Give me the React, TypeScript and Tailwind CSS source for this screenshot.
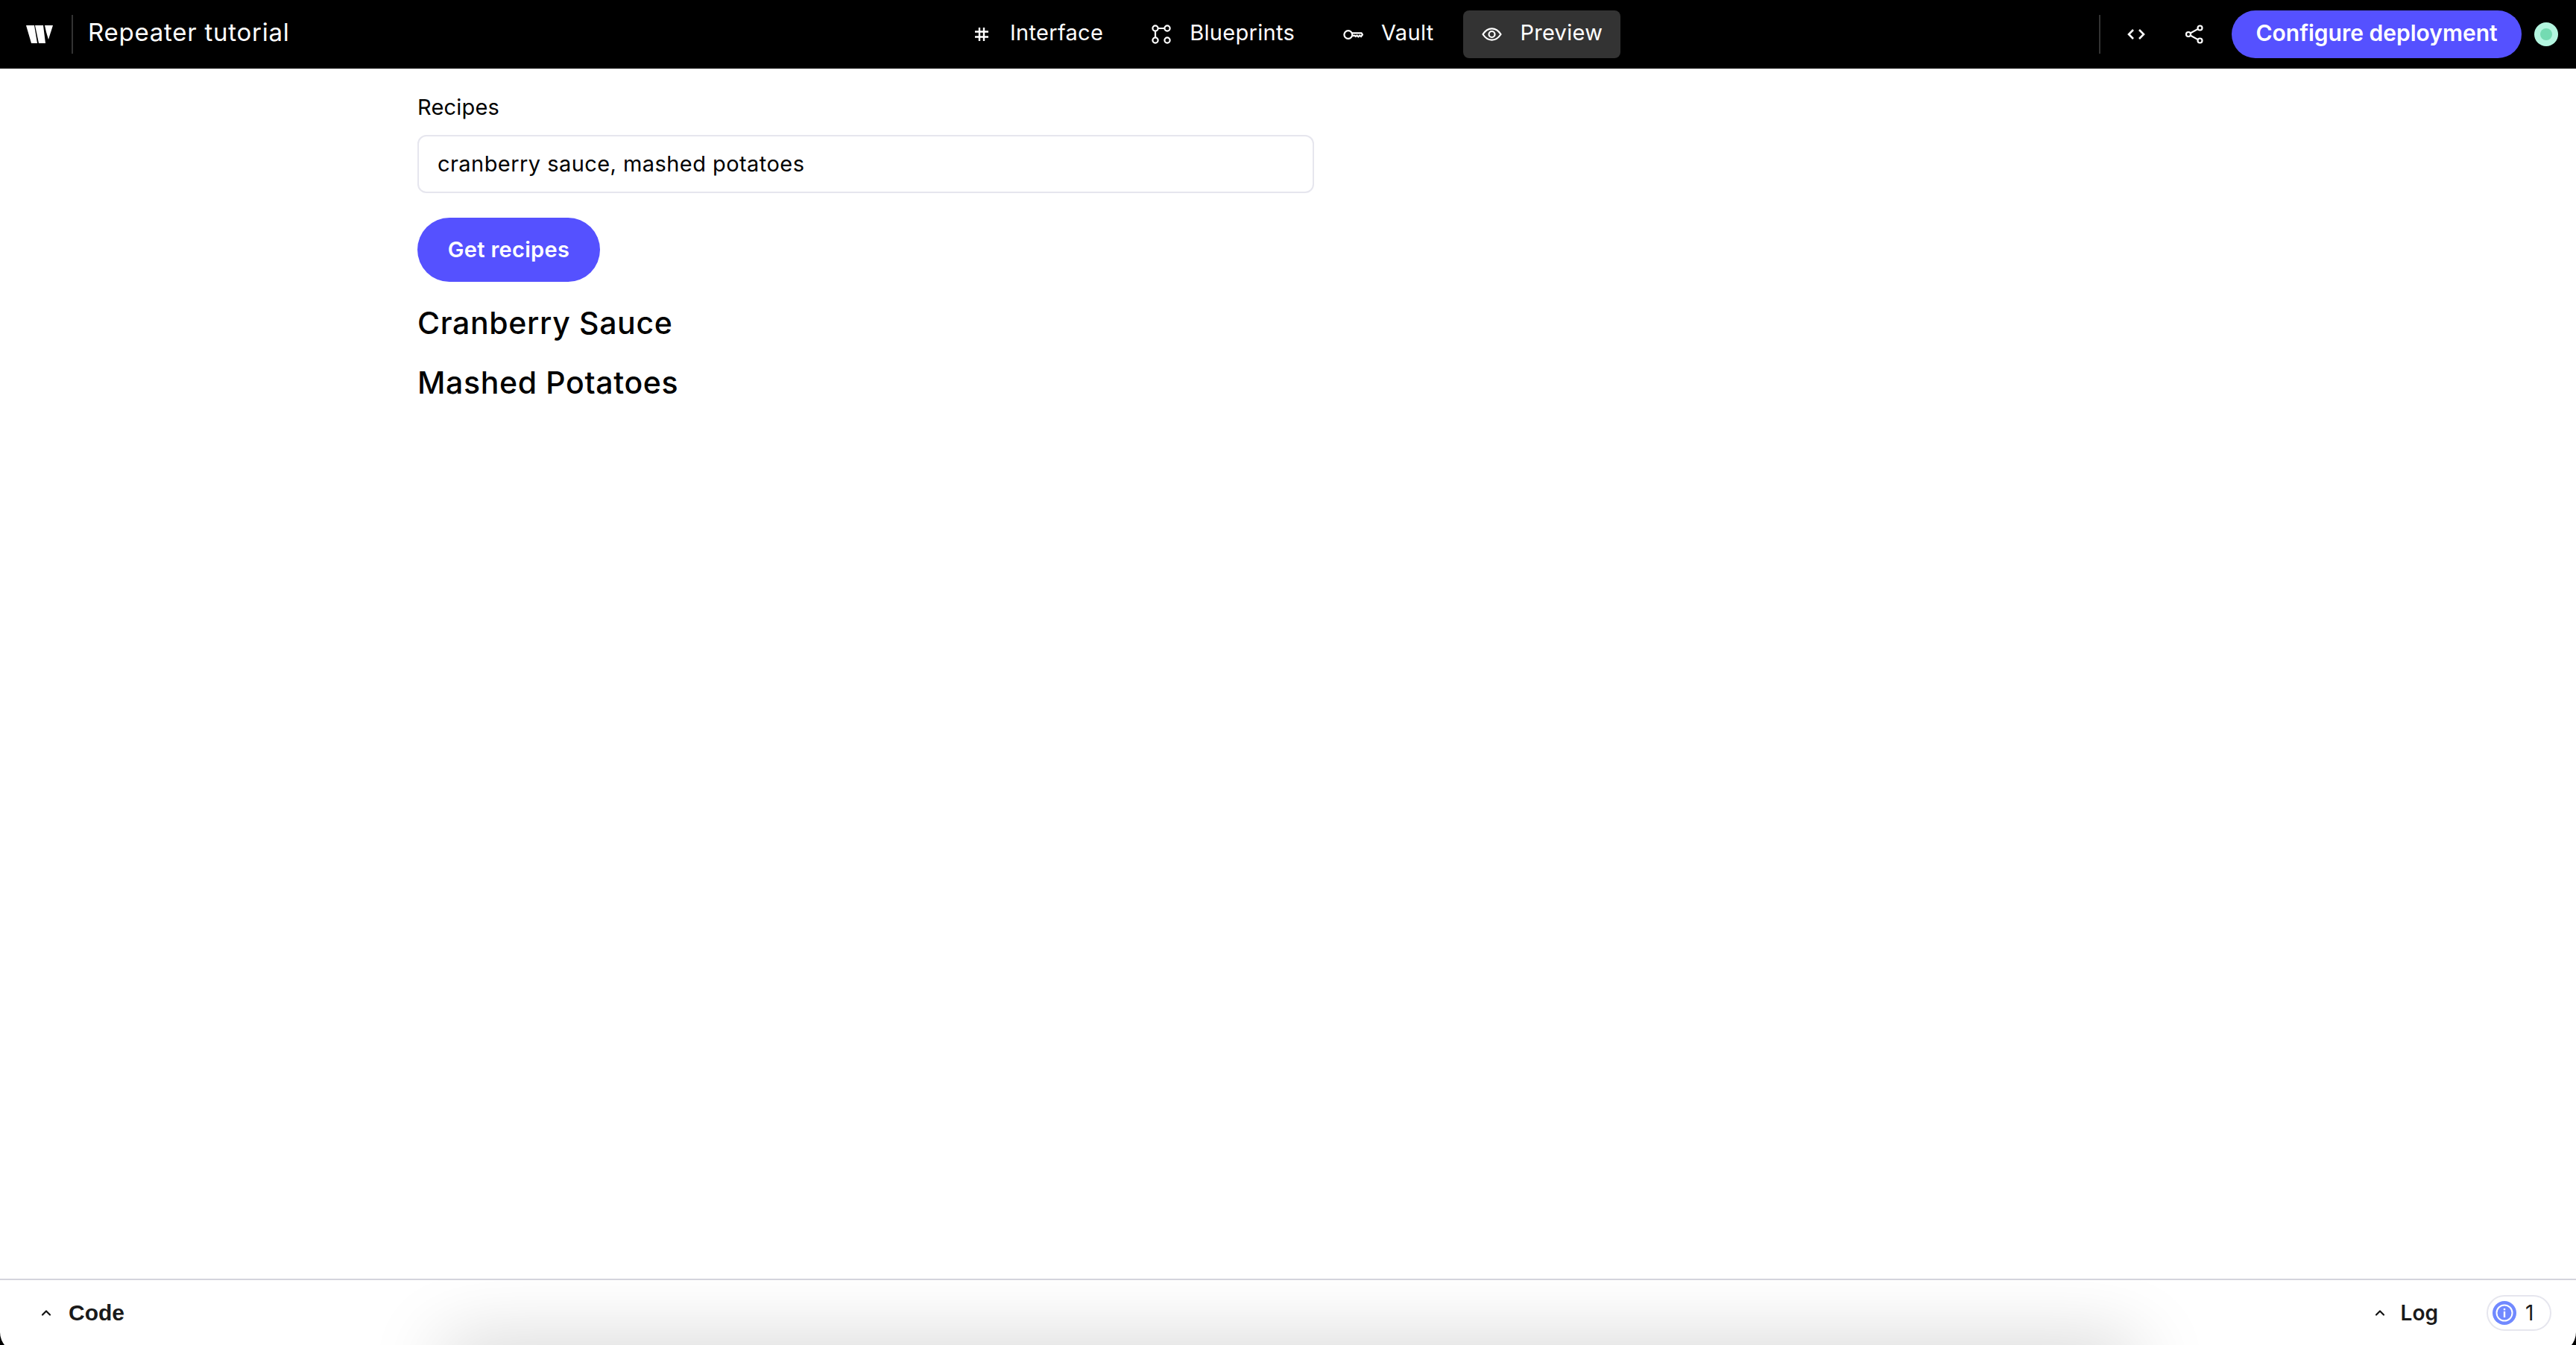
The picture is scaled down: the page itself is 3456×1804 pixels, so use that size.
import { ChevronUp } from "lucide-react";

function Logo() {
  return (
    <svg width="36" height="26" viewBox="0 0 36 26" fill="#fff">
      <polygon points="0,1 11,1 15,25 7,25" />
      <polygon points="12,1 23,1 26,25 17,25" />
      <polygon points="25,1 36,1 30,20 27,10" />
    </svg>
  );
}

function HashIcon() {
  return (
    <svg width="20" height="20" viewBox="0 0 20 20" fill="none" stroke="#fff" strokeWidth="2.4">
      <path d="M1 6.5h18M1 13.5h18M7 1v18M13 1v18" />
    </svg>
  );
}

function BlueprintIcon() {
  return (
    <svg width="26" height="26" viewBox="0 0 26 26" fill="none" stroke="#fff" strokeWidth="2.2">
      <circle cx="5" cy="5" r="3.6" />
      <circle cx="21" cy="5" r="3.6" />
      <circle cx="5" cy="21" r="3.6" />
      <circle cx="21" cy="21" r="3.6" />
      <path d="M8.6 5h8.8M5 8.6v8.8" />
    </svg>
  );
}

function KeyIcon() {
  return (
    <svg width="27" height="15" viewBox="0 0 27 15" fill="none" stroke="#fff" strokeWidth="2.2">
      <circle cx="6.8" cy="7.5" r="5.4" />
      <path d="M12 5.4h12.5l1.5 2.2-2 2.4-1.8-1.4-1.8 1.6-1.8-1.6-1.8 1.2-1.2-1H12" />
    </svg>
  );
}

function EyeIcon() {
  return (
    <svg width="27" height="18" viewBox="0 0 27 18" fill="none" stroke="#fff" strokeWidth="2.2">
      <path d="M1.5 9C5 3.6 9 1.4 13.5 1.4S22 3.6 25.5 9C22 14.4 18 16.6 13.5 16.6S5 14.4 1.5 9Z" />
      <circle cx="13.5" cy="9" r="4" />
    </svg>
  );
}

function CodeIcon() {
  return (
    <svg width="24" height="16" viewBox="0 0 24 16" fill="none" stroke="#fff" strokeWidth="2.6">
      <path d="M8 2l-6 6 6 6M16 2l6 6-6 6" />
    </svg>
  );
}

function ShareIcon() {
  return (
    <svg width="30" height="30" viewBox="0 0 30 30" fill="none" stroke="#fff" strokeWidth="2.2">
      <circle cx="22.5" cy="6.5" r="3" />
      <circle cx="7" cy="15" r="3" />
      <circle cx="22.5" cy="23.5" r="3" />
      <path d="M9.6 13.5l10.2-5.6M9.6 16.5l10.2 5.6" />
    </svg>
  );
}

function InfoIcon() {
  return (
    <svg width="32" height="32" viewBox="0 0 32 32">
      <circle cx="16" cy="16" r="16" fill="#7189ff" />
      <circle cx="16" cy="16" r="10.5" fill="none" stroke="#fff" strokeWidth="2" />
      <rect x="14.8" y="14" width="2.4" height="8" fill="#fff" />
      <rect x="14.8" y="10" width="2.4" height="2.4" fill="#fff" />
    </svg>
  );
}

function NavItem({ icon, label, active }: { icon: React.ReactNode; label: string; active?: boolean }) {
  return (
    <div
      className={`flex h-[64px] items-center gap-[24px] rounded-[8px] px-[24px] text-[29px] tracking-[0.3px] text-white ${
        active ? "bg-[#333333]" : ""
      }`}
    >
      <span className="flex w-[28px] justify-center">{icon}</span>
      <span className="pb-[4px]">{label}</span>
    </div>
  );
}

export default function App() {
  return (
    <div className="flex h-[1804px] w-full flex-col overflow-hidden bg-black font-['Inter',sans-serif]">
      <header className="flex h-[92px] shrink-0 items-center bg-black pr-[24px]">
        <div className="flex w-[1279px] shrink-0 items-center pl-[35px]">
          <Logo />
          <div className="ml-[25px] h-[52px] w-[2px] bg-[#333333]" />
          <span className="ml-[20px] pb-[4px] text-[33px] tracking-[0.75px] text-white">Repeater tutorial</span>
        </div>
        <nav className="flex items-center gap-[16px]">
          <NavItem icon={<HashIcon />} label="Interface" />
          <NavItem icon={<BlueprintIcon />} label="Blueprints" />
          <NavItem icon={<KeyIcon />} label="Vault" />
          <NavItem icon={<EyeIcon />} label="Preview" active />
        </nav>
        <div className="ml-auto flex items-center">
          <div className="h-[52px] w-[2px] bg-[#333333]" />
          <div className="ml-[36px]"><CodeIcon /></div>
          <div className="ml-[51px]"><ShareIcon /></div>
          <button className="ml-[35px] h-[64px] w-[389px] rounded-full bg-[#5551ff] pb-[4px] text-[30px] font-semibold text-white">
            Configure deployment
          </button>
          <div className="ml-[17px] flex size-[32px] items-center justify-center rounded-full bg-[#b3f5df]">
            <div className="size-[16px] rounded-full bg-[#74dbb2]" />
          </div>
        </div>
      </header>

      <main className="mb-[-10px] flex flex-1 flex-col rounded-b-[27px] bg-white">
        <div className="flex-1 pl-[560px] pt-[34px]">
          <div className="text-[29px] leading-[36px] tracking-[0.2px] text-black">Recipes</div>
          <div className="mt-[19px] flex h-[78px] w-[1203px] items-center rounded-[12px] border-2 border-[#e6e6ee] pl-[25px] text-[29px] tracking-[0.44px] text-black">
            cranberry sauce, mashed potatoes
          </div>
          <button className="mt-[33px] h-[86px] w-[245px] rounded-full bg-[#5551ff] text-[29px] font-semibold tracking-[0.3px] text-white">
            Get recipes
          </button>
          <h3 className="mt-[31px] text-[41px] font-medium leading-[48px] tracking-[0.65px] text-black">Cranberry Sauce</h3>
          <h3 className="mt-[32px] text-[41px] font-medium leading-[48px] tracking-[0.65px] text-black">Mashed Potatoes</h3>
        </div>

        <footer className="relative flex h-[99px] items-center overflow-hidden rounded-b-[27px] border-t-2 border-[#d4d4dc] pb-[10px] pl-[52px] pr-[33px]">
          <div className="absolute left-[590px] top-[87px] h-[60px] w-[2280px] rounded-full shadow-[0_0_100px_0_rgba(0,0,0,0.22)]" />
          <ChevronUp size={20} color="#111" strokeWidth={2.6} />
          <span className="ml-[20px] font-['Liberation_Sans',sans-serif] text-[30px] font-bold text-[#1a1a1a]">Code</span>
          <div className="ml-auto flex items-center">
            <ChevronUp size={20} color="#111" strokeWidth={2.6} />
            <span className="ml-[18px] text-[28px] font-semibold text-[#1a1a1a]">Log</span>
            <div className="ml-[65px] flex h-[48px] w-[87px] items-center rounded-full border-2 border-[#e6e6ee] pl-[6px]">
              <InfoIcon />
              <span className="ml-[12px] text-[28px] text-[#1a1a1a]">1</span>
            </div>
          </div>
        </footer>
      </main>
    </div>
  );
}
